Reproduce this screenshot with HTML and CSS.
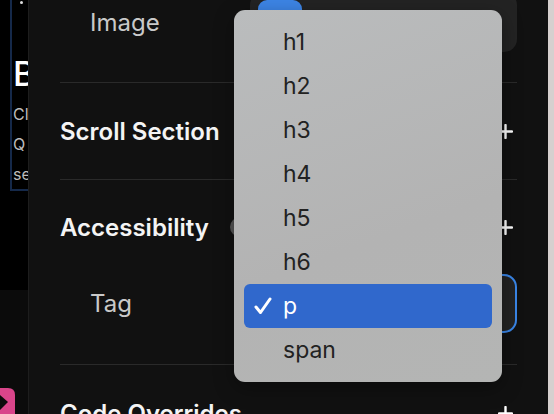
FILE: index.html
```html
<!DOCTYPE html>
<html lang="en">
<head>
    <meta charset="UTF-8">
    <meta name="viewport" content="width=device-width, initial-scale=1.0">
    <title>Properties</title>
    <link rel="stylesheet" href="styles.css">
</head>
<body>
    <div class="sidebar">
        <div class="card">
            <span class="dot"></span>
            <div class="card-title">B</div>
            <div class="card-line first">Cl</div>
            <div class="card-line">Q</div>
            <div class="card-line">se</div>
        </div>
        <div class="thumb">
            <svg class="thumb-logo" width="16" height="28" viewBox="0 0 16 28">
                <path d="M0 0 H8 Q15 0 15 7 V28 H0 Z" fill="#d9458a"/>
                <path d="M0 7 L8 14 L0 22 Z" fill="#0b0b0b"/>
            </svg>
        </div>
    </div>

    <div class="panel">
        <div class="row image-row">
            <div class="label">Image</div>
            <div class="field">
                <div class="field-pill"></div>
            </div>
        </div>

        <div class="section">
            <div class="section-head">
                <div class="title">Scroll Section</div>
                <svg class="plus" width="15" height="15" viewBox="0 0 15 15"><path d="M7.5 1 V14 M1 7.5 H14" stroke="#fff" stroke-width="2.4" stroke-linecap="round"/></svg>
            </div>
        </div>

        <div class="section">
            <div class="section-head short">
                <div class="title">Accessibility <span class="info"></span></div>
                <svg class="plus" width="15" height="15" viewBox="0 0 15 15"><path d="M7.5 1 V14 M1 7.5 H14" stroke="#fff" stroke-width="2.4" stroke-linecap="round"/></svg>
            </div>
            <div class="row tag-row">
                <div class="label">Tag</div>
                <div class="field select"></div>
            </div>
        </div>

        <div class="section">
            <div class="section-head">
                <div class="title">Code Overrides</div>
                <svg class="plus" width="15" height="15" viewBox="0 0 15 15"><path d="M7.5 1 V14 M1 7.5 H14" stroke="#fff" stroke-width="2.4" stroke-linecap="round"/></svg>
            </div>
        </div>

        <ul class="menu">
            <li class="menu-item">h1</li>
            <li class="menu-item">h2</li>
            <li class="menu-item">h3</li>
            <li class="menu-item">h4</li>
            <li class="menu-item">h5</li>
            <li class="menu-item">h6</li>
            <li class="menu-item selected">
                <svg class="check" width="18" height="18" viewBox="0 0 18 18"><path d="M2 10 L6.5 15.5 L16 2" fill="none" stroke="#fff" stroke-width="3" stroke-linecap="round" stroke-linejoin="round"/></svg>
                p
            </li>
            <li class="menu-item">span</li>
        </ul>
    </div>

    <div class="edge"></div>
</body>
</html>
```

FILE: styles.css
```css
* {
    box-sizing: border-box;
}

body {
    margin: 0;
    width: 554px;
    height: 414px;
    overflow: hidden;
    display: flex;
    background-color: #000;
    font-family: Inter, 'Noto Sans', sans-serif;
}

/* left canvas strip */

.sidebar {
    width: 28px;
    height: 414px;
    flex-shrink: 0;
    display: flex;
    flex-direction: column;
    overflow: hidden;
}

.card {
    margin-left: 10px;
    width: 40px;
    height: 191px;
    flex-shrink: 0;
    border-left: 2px solid #15294a;
    border-bottom: 2px solid #15294a;
    padding-left: 1px;
    white-space: nowrap;
}

.dot {
    display: block;
    width: 3px;
    height: 3px;
    border-radius: 50%;
    background-color: #ddd;
    margin: 1px 0 0 7px;
}

.card-title {
    margin-top: 50px;
    font-size: 34px;
    font-weight: 500;
    color: #fff;
    line-height: 40px;
}

.card-line {
    font-size: 16px;
    color: #bdbdbd;
    line-height: 30px;
}

.card-line.first {
    margin-top: 5px;
}

.thumb {
    margin-top: 99px;
    flex: 1;
    background-color: #0b0b0b;
    display: flex;
    align-items: flex-end;
}

.thumb-logo {
    display: block;
    margin-bottom: -2px;
}

/* properties panel */

.panel {
    position: relative;
    width: 520px;
    height: 414px;
    overflow: hidden;
    flex-shrink: 0;
    background-color: #111;
    border-left: 1px solid #1d1d1d;
    padding: 0 31px;
}

.row {
    display: flex;
    align-items: center;
}

.label {
    width: 190px;
    padding-left: 30px;
    font-size: 24px;
    color: #c9c9c9;
}

.field {
    flex: 1;
    height: 60px;
    background-color: #232323;
    border-radius: 13px;
}

.image-row {
    margin-top: -8px;
    margin-bottom: 30px;
}

.field-pill {
    width: 44px;
    height: 44px;
    margin: 8px 0 0 8px;
    background-color: #3d85e6;
    border-radius: 9px;
}

.section {
    border-top: 1px solid #2a2a2a;
}

.section-head {
    height: 96px;
    display: flex;
    align-items: center;
    justify-content: space-between;
}

.section-head.short {
    height: 94px;
}

.title {
    display: flex;
    align-items: center;
    font-size: 24px;
    font-weight: 600;
    color: #f4f4f4;
}

.info {
    display: inline-block;
    width: 20px;
    height: 20px;
    border-radius: 50%;
    background-color: #555;
    margin-left: 21px;
}

.plus {
    display: block;
    margin-right: 4px;
}

.tag-row {
    margin-bottom: 31px;
}

.select {
    height: 59px;
    border: 2px solid #3a86e8;
    border-radius: 13px;
}

/* dropdown menu */

.menu {
    position: absolute;
    left: 205px;
    top: 10px;
    width: 268px;
    margin: 0;
    padding: 10px;
    list-style: none;
    background: linear-gradient(160deg, #babcbd, #b3b3b3 60%, #b4b5b4);
    border-radius: 11px;
    box-shadow: 0 6px 20px rgba(0, 0, 0, 0.35);
}

.menu-item {
    position: relative;
    height: 44px;
    padding-left: 39px;
    display: flex;
    align-items: center;
    font-size: 23px;
    color: #222;
    border-radius: 6px;
}

.menu-item.selected {
    background-color: #3068cc;
    color: #fff;
}

.check {
    position: absolute;
    left: 10px;
    top: 13px;
}

.edge {
    flex: 1;
    background-color: #d6d0cf;
}
```
